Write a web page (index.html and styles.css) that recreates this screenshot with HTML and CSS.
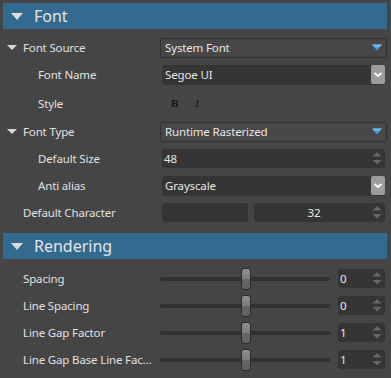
FILE: index.html
```html
<!DOCTYPE html>
<html>
<head>
<meta charset="utf-8">
<link rel="stylesheet" href="styles.css">
</head>
<body>
<div class="panel">
  <div class="section-header"><span class="hdr-tri"></span><span class="hdr-title">Font</span></div>
  <div class="rows top-rows">
    <div class="row">
      <div class="label"><span class="slot"><span class="row-tri"></span></span>Font Source</div>
      <div class="value"><div class="combo flat"><span class="ctext">System Font</span><svg class="blue-tri" width="10" height="7" viewBox="0 0 10 7"><defs><linearGradient id="bt" x1="0" y1="0" x2="0" y2="1"><stop offset="0" stop-color="#8fd2ff"/><stop offset="0.35" stop-color="#4fb0f2"/><stop offset="1" stop-color="#2a86d0"/></linearGradient></defs><polygon points="0,0.5 10,0.5 5,6.5" fill="url(#bt)"/></svg></div></div>
    </div>
    <div class="row">
      <div class="label indent">Font Name</div>
      <div class="value"><div class="combo dark"><span class="ctext">Segoe UI</span><span class="drop-btn"><svg width="14" height="19" viewBox="0 0 14 19"><polyline points="3.5,8 7,11 10.5,8" fill="none" stroke="#ffffff" stroke-width="2"/></svg></span></div></div>
    </div>
    <div class="row style-row">
      <div class="label indent">Style</div>
      <div class="value styles"><span class="bold-btn">B</span><span class="ital-btn">I</span></div>
    </div>
    <div class="row">
      <div class="label"><span class="slot"><span class="row-tri"></span></span>Font Type</div>
      <div class="value"><div class="combo flat"><span class="ctext">Runtime Rasterized</span><svg class="blue-tri" width="10" height="7" viewBox="0 0 10 7"><polygon points="0,0.5 10,0.5 5,6.5" fill="url(#bt)"/></svg></div></div>
    </div>
    <div class="row">
      <div class="label indent">Default Size</div>
      <div class="value"><div class="spin"><span class="ctext">48</span><svg class="arrows" width="10" height="15" viewBox="0 0 10 15"><polygon points="0.5,5.5 5,1 9.5,5.5" fill="#666"/><polygon points="0.5,9 9.5,9 5,13.5" fill="#666"/></svg></div></div>
    </div>
    <div class="row">
      <div class="label indent">Anti alias</div>
      <div class="value"><div class="combo dark"><span class="ctext">Grayscale</span><span class="drop-btn"><svg width="14" height="19" viewBox="0 0 14 19"><polyline points="3.5,8 7,11 10.5,8" fill="none" stroke="#ffffff" stroke-width="2"/></svg></span></div></div>
    </div>
    <div class="row">
      <div class="label"><span class="slot"></span>Default Character</div>
      <div class="value pair"><div class="spin plain"></div><div class="spin"><span class="ctext center">32</span><svg class="arrows" width="10" height="15" viewBox="0 0 10 15"><polygon points="0.5,5.5 5,1 9.5,5.5" fill="#666"/><polygon points="0.5,9 9.5,9 5,13.5" fill="#666"/></svg></div></div>
    </div>
  </div>

  <div class="section-header"><span class="hdr-tri"></span><span class="hdr-title">Rendering</span></div>
  <div class="rows bottom-rows">
    <div class="row">
      <div class="label"><span class="slot"></span>Spacing</div>
      <div class="value slider-val"><div class="slider"><div class="track"></div><div class="thumb"></div></div><div class="spin num"><span class="ctext">0</span><svg class="arrows" width="10" height="15" viewBox="0 0 10 15"><polygon points="0.5,5.5 5,1 9.5,5.5" fill="#666"/><polygon points="0.5,9 9.5,9 5,13.5" fill="#666"/></svg></div></div>
    </div>
    <div class="row">
      <div class="label"><span class="slot"></span>Line Spacing</div>
      <div class="value slider-val"><div class="slider"><div class="track"></div><div class="thumb"></div></div><div class="spin num"><span class="ctext">0</span><svg class="arrows" width="10" height="15" viewBox="0 0 10 15"><polygon points="0.5,5.5 5,1 9.5,5.5" fill="#666"/><polygon points="0.5,9 9.5,9 5,13.5" fill="#666"/></svg></div></div>
    </div>
    <div class="row">
      <div class="label"><span class="slot"></span>Line Gap Factor</div>
      <div class="value slider-val"><div class="slider"><div class="track"></div><div class="thumb"></div></div><div class="spin num"><span class="ctext">1</span><svg class="arrows" width="10" height="15" viewBox="0 0 10 15"><polygon points="0.5,5.5 5,1 9.5,5.5" fill="#666"/><polygon points="0.5,9 9.5,9 5,13.5" fill="#666"/></svg></div></div>
    </div>
    <div class="row">
      <div class="label"><span class="slot"></span>Line Gap Base Line Fac...</div>
      <div class="value slider-val"><div class="slider"><div class="track"></div><div class="thumb"></div></div><div class="spin num"><span class="ctext">1</span><svg class="arrows" width="10" height="15" viewBox="0 0 10 15"><polygon points="0.5,5.5 5,1 9.5,5.5" fill="#666"/><polygon points="0.5,9 9.5,9 5,13.5" fill="#666"/></svg></div></div>
    </div>
  </div>
</div>
</body>
</html>
```

FILE: styles.css
```css
html, body {
  margin: 0;
  padding: 0;
  background: #454545;
}
body {
  width: 391px;
  height: 378px;
  overflow: hidden;
  font-family: "Noto Sans", "Open Sans", sans-serif;
  font-size: 11.5px;
  letter-spacing: -0.15px;
  color: #e0e0e0;
}
.panel {
  padding: 3px 4px 0 3px;
}
.section-header {
  height: 26px;
  background: #336a8f;
  display: flex;
  align-items: center;
}
.hdr-tri {
  width: 0;
  height: 0;
  margin-left: 8px;
  border-left: 6.5px solid transparent;
  border-right: 6.5px solid transparent;
  border-top: 7px solid #dcdcdc;
}
.hdr-title {
  margin-left: 11px;
  font-size: 16px;
  letter-spacing: 0;
  color: #e4e4e4;
  line-height: 26px;
}
.rows {
  display: flex;
  flex-direction: column;
}
.top-rows {
  padding-top: 5px;
  padding-bottom: 7px;
}
.bottom-rows {
  padding-top: 6px;
}
.row {
  height: 27px;
  display: grid;
  grid-template-columns: 157px 1fr;
  align-items: center;
}
.style-row {
  height: 30px;
}
.label {
  display: flex;
  align-items: center;
  padding-left: 4px;
  white-space: nowrap;
  color: #e0e0e0;
}
.label.indent {
  padding-left: 35px;
}
.slot {
  width: 16px;
  flex: none;
  display: flex;
  align-items: center;
}
.row-tri {
  width: 0;
  height: 0;
  border-left: 5px solid transparent;
  border-right: 5px solid transparent;
  border-top: 5px solid #d8d8d8;
}
.value {
  display: flex;
  align-items: center;
}
.combo {
  flex: 1;
  display: flex;
  align-items: center;
  box-sizing: border-box;
  border-radius: 3px;
}
.combo.flat {
  height: 20px;
  border: 1px solid #303030;
  background: #474747;
  padding: 0 4px 0 4px;
}
.combo.dark {
  height: 20px;
  margin: 0 2px;
  background: #353535;
  padding: 0 0 0 3px;
}
.ctext {
  flex: 1;
  color: #e6e6e6;
  white-space: nowrap;
}
.ctext.center {
  text-align: center;
}
.blue-tri {
  display: block;
  flex: none;
}
.drop-btn {
  flex: none;
  width: 14px;
  height: 19px;
  background: #9c9c9c;
  border-radius: 2px;
  display: block;
}
.drop-btn svg {
  display: block;
}
.styles {
  padding-left: 11px;
  gap: 17px;
  font-family: "Liberation Serif", "DejaVu Serif", serif;
  font-size: 11px;
  letter-spacing: 0;
  color: #151515;
}
.bold-btn {
  font-weight: bold;
}
.ital-btn {
  font-style: italic;
}
.spin {
  flex: 1;
  height: 19px;
  box-sizing: border-box;
  margin: 0 2px;
  background: #353535;
  border-radius: 3px;
  display: flex;
  align-items: center;
  padding: 0 3px 0 2px;
}
.arrows {
  display: block;
  flex: none;
}
.pair {
  display: grid;
  grid-template-columns: 86px 1fr;
  gap: 6px;
  padding: 0 2px;
}
.pair .spin {
  margin: 0;
}
.slider-val {
  padding-right: 2px;
  gap: 8px;
}
.slider {
  flex: 1;
  position: relative;
  height: 22px;
  display: flex;
  align-items: center;
}
.track {
  width: 100%;
  height: 4px;
  background: #313131;
  border-radius: 2px;
}
.thumb {
  position: absolute;
  left: 81px;
  top: 0;
  width: 10px;
  height: 22px;
  box-sizing: border-box;
  border: 1px solid #2b2b2b;
  border-radius: 3px;
  background: linear-gradient(to bottom, #8e8e8e 0%, #7c7c7c 50%, #666 50%, #606060 100%);
}
.spin.num {
  flex: none;
  width: 47px;
  margin: 0;
}
```
